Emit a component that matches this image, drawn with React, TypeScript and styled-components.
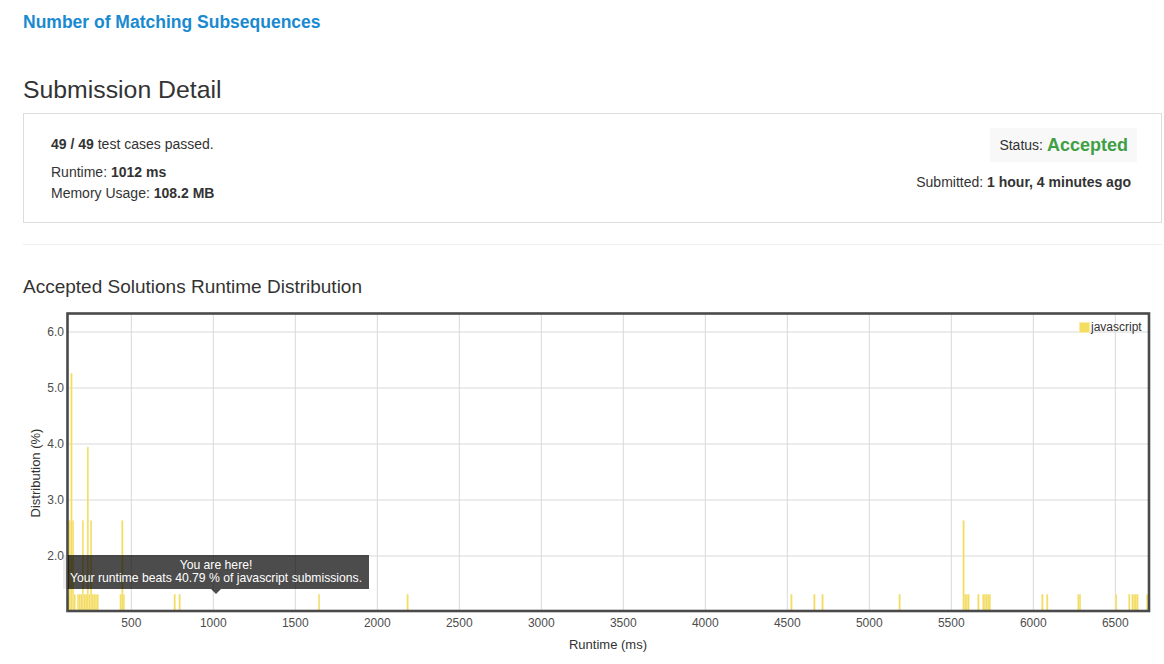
import { createGlobalStyle, styled } from 'styled-components';

const GlobalStyle = createGlobalStyle`
  html, body {
    margin: 0;
    padding: 0;
    background: #fff;
  }
  body {
    font-family: "Liberation Sans", Arial, Helvetica, sans-serif;
    color: #333;
  }
`;

// chart scales, taken straight from the page coordinates
const xOf = (ms: number) => 49.3 + 0.164 * ms;
const yOf = (pct: number) => 612 - 56 * (pct - 1);
const PCT_PER_SUBMISSION = 1.316;
const BIN_WIDTH = 1.64;
const PLOT = { left: 67.5, top: 313.5, right: 1149, bottom: 611 };

// [bin start in ms, number of submissions]
const bins: [number, number][] = [
  [110, 1], [120, 2], [130, 4], [140, 2], [150, 1],
  [170, 1], [180, 1], [190, 1], [200, 2], [210, 1], [220, 1], [230, 3],
  [240, 1], [250, 2], [260, 1], [270, 1], [280, 1], [290, 1],
  [430, 1], [440, 2], [450, 1],
  [760, 1], [790, 1], [1640, 1], [2180, 1],
  [4520, 1], [4660, 1], [4710, 1], [5180, 1],
  [5570, 2], [5580, 1], [5590, 1], [5600, 1], [5660, 1],
  [5690, 1], [5700, 1], [5710, 1], [5720, 1], [5730, 1],
  [6050, 1], [6080, 1], [6270, 1], [6280, 1],
  [6500, 1], [6580, 1], [6600, 1], [6610, 1], [6620, 1], [6630, 1], [6690, 1],
];

const xTicks = [500, 1000, 1500, 2000, 2500, 3000, 3500, 4000, 4500, 5000, 5500, 6000, 6500];
const yTicks = [2, 3, 4, 5, 6];

const Page = styled.div`
  padding: 12px 2px 0 23px;
`;

const ProblemLink = styled.a`
  display: block;
  font-size: 17.5px;
  line-height: 20px;
  font-weight: bold;
  color: #1a8ad0;
  text-decoration: none;
`;

const PageTitle = styled.h3`
  margin: 44px 0 9px;
  font-size: 24.8px;
  line-height: 28px;
  font-weight: normal;
  color: #333;
`;

const DetailBox = styled.div`
  display: flex;
  justify-content: space-between;
  height: 108px;
  border: 1px solid #ddd;
`;

const DetailColumn = styled.div<{ $right?: boolean }>`
  display: flex;
  flex-direction: column;
  align-items: ${p => (p.$right ? 'flex-end' : 'flex-start')};
  padding: ${p => (p.$right ? '14px 24px 0 0' : '20px 0 0 27px')};
`;

const DetailLine = styled.div<{ $gap?: number }>`
  font-size: 14px;
  line-height: 21px;
  margin-top: ${p => p.$gap ?? 0}px;
  color: #333;

  b {
    font-weight: bold;
  }
`;

const StatusBadge = styled.div`
  display: flex;
  align-items: center;
  height: 34px;
  padding: 0 9px;
  background: #f8f8f8;
  font-size: 14px;
`;

const StatusText = styled.span`
  margin-left: 4px;
  font-size: 18px;
  font-weight: bold;
  color: #3f9f45;
`;

const SubmittedLine = styled(DetailLine)`
  padding-right: 6px;
`;

const Divider = styled.hr`
  margin: 21px 0 0;
  border: 0;
  border-top: 1px solid #eee;
`;

const SectionTitle = styled.h4`
  margin: 31px 0 6px;
  font-size: 19px;
  line-height: 22px;
  font-weight: normal;
  color: #333;
`;

const ChartWrap = styled.div`
  position: relative;
  margin-left: -23px;
  width: 1164px;
  height: 360px;
`;

const ChartSvg = styled.svg`
  display: block;
  font-family: "Liberation Sans", Arial, Helvetica, sans-serif;
`;

const Tooltip = styled.div`
  position: absolute;
  left: 63px;
  top: 251px;
  width: 306px;
  height: 34px;
  box-sizing: border-box;
  padding-top: 4px;
  background: linear-gradient(to right, rgba(0, 0, 0, 0.07) 0 5px, rgba(0, 0, 0, 0.7) 5px);
  color: #fff;
  font-size: 12.2px;
  line-height: 13px;
  text-align: center;

  &::after {
    content: '';
    position: absolute;
    left: 148px;
    bottom: -5px;
    border-left: 5px solid transparent;
    border-right: 5px solid transparent;
    border-top: 5px solid rgba(0, 0, 0, 0.7);
  }
`;

function RuntimeChart() {
  return (
    <ChartWrap>
      <ChartSvg width={1164} height={360} viewBox="0 304 1164 360">
        <defs>
          <clipPath id="plot">
            <rect x={PLOT.left} y={PLOT.top} width={PLOT.right - PLOT.left} height={PLOT.bottom - PLOT.top} />
          </clipPath>
        </defs>

        {xTicks.map(t => (
          <line key={t} x1={xOf(t)} x2={xOf(t)} y1={PLOT.top} y2={PLOT.bottom} stroke="#d9d9d9" strokeWidth={1} />
        ))}
        {yTicks.map(t => (
          <line key={t} x1={PLOT.left} x2={PLOT.right} y1={yOf(t)} y2={yOf(t)} stroke="#d9d9d9" strokeWidth={1} />
        ))}

        <g clipPath="url(#plot)">
          {bins.map(([ms, n]) => {
            const top = yOf(n * PCT_PER_SUBMISSION);
            return (
              <rect
                key={ms}
                x={xOf(ms)}
                y={top}
                width={BIN_WIDTH}
                height={PLOT.bottom - top}
                fill="#f3dc5f"
                stroke="#f8eaa6"
                strokeWidth={0.3}
              />
            );
          })}
        </g>

        <rect
          x={PLOT.left}
          y={PLOT.top}
          width={PLOT.right - PLOT.left}
          height={PLOT.bottom - PLOT.top}
          fill="none"
          stroke="#4a4a4a"
          strokeWidth={2.6}
        />

        {yTicks.map(t => (
          <text key={t} x={64} y={yOf(t) + 4} fontSize={12} fill="#4d4d4d" textAnchor="end">
            {t.toFixed(1)}
          </text>
        ))}
        {xTicks.map(t => (
          <text key={t} x={xOf(t)} y={627} fontSize={12} fill="#4d4d4d" textAnchor="middle">
            {t}
          </text>
        ))}

        <text x={608} y={649} fontSize={13} fill="#333" textAnchor="middle">
          Runtime (ms)
        </text>
        <text x={40} y={473} fontSize={13} fill="#333" textAnchor="middle" transform="rotate(-90 40 473)">
          Distribution (%)
        </text>

        <rect x={1079.5} y={322.5} width={10} height={10} fill="#f4de62" stroke="#f9ecaa" strokeWidth={1} />
        <text x={1091} y={331} fontSize={12} fill="#333">
          javascript
        </text>
      </ChartSvg>

      <Tooltip>
        You are here!
        <br />
        Your runtime beats 40.79 % of javascript submissions.
      </Tooltip>
    </ChartWrap>
  );
}

export default function App() {
  return (
    <>
      <GlobalStyle />
      <Page>
        <ProblemLink href="#">Number of Matching Subsequences</ProblemLink>
        <PageTitle>Submission Detail</PageTitle>
        <DetailBox>
          <DetailColumn>
            <DetailLine>
              <b>49 / 49</b> test cases passed.
            </DetailLine>
            <DetailLine $gap={7}>
              Runtime: <b>1012 ms</b>
            </DetailLine>
            <DetailLine>
              Memory Usage: <b>108.2 MB</b>
            </DetailLine>
          </DetailColumn>
          <DetailColumn $right>
            <StatusBadge>
              Status:<StatusText>Accepted</StatusText>
            </StatusBadge>
            <SubmittedLine $gap={10}>
              Submitted: <b>1 hour, 4 minutes ago</b>
            </SubmittedLine>
          </DetailColumn>
        </DetailBox>
        <Divider />
        <SectionTitle>Accepted Solutions Runtime Distribution</SectionTitle>
        <RuntimeChart />
      </Page>
    </>
  );
}
